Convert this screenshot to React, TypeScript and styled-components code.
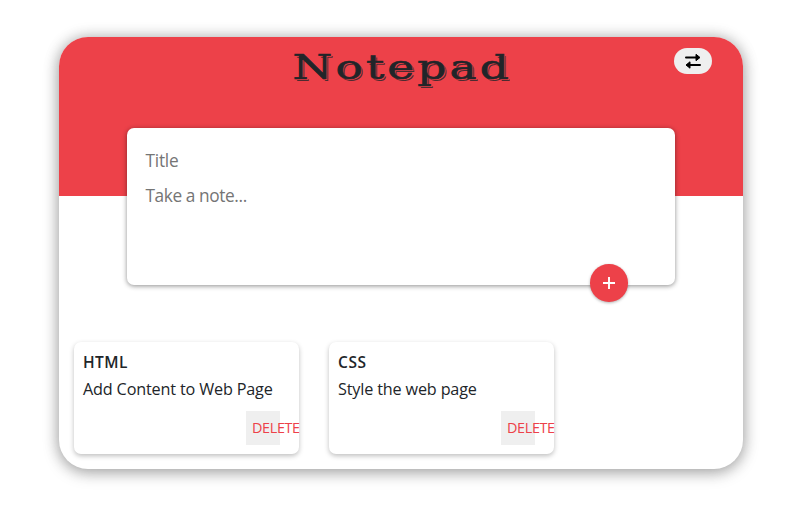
import React from 'react';
import styled, { createGlobalStyle } from 'styled-components';

const RED = '#ed4149';

const GlobalStyle = createGlobalStyle`
  * { box-sizing: border-box; }
  body {
    margin: 0;
    background: #fff;
    color: #212529;
    font-family: 'Open Sans', 'Noto Sans', sans-serif;
  }
  button, input, textarea { font-family: inherit; }
`;

const Page = styled.main`
  height: 507px;
  padding: 37px 59px 38px;
  overflow: hidden;
`;

const Panel = styled.section`
  height: 432px;
  width: 684px;
  border-radius: 29px;
  background: #fff;
  box-shadow: 0 4px 16px rgba(0, 0, 0, 0.25), 0 0 15px rgba(0, 0, 0, 0.22);
`;

const Header = styled.header`
  position: relative;
  height: 158.5px;
  display: flex;
  flex-direction: column;
  align-items: center;
  background: ${RED};
  border-radius: 29px 29px 0 0;
`;

const Title = styled.h1`
  margin: 9px 0 0;
  height: 44px;
  line-height: 44px;
  font-family: 'DejaVu Serif', serif;
  font-size: 32px;
  font-weight: 400;
  letter-spacing: 2.2px;
  white-space: nowrap;
  -webkit-text-stroke: 0.6px #212529;
  transform: translateX(1px) scale(1.42, 1.03);
  text-shadow: 0.8px 1px ${RED}, 1.5px 2px rgba(33, 37, 41, 0.8);
`;

const SwitchButton = styled.button`
  position: absolute;
  top: 11px;
  right: 31px;
  width: 38px;
  height: 26px;
  padding: 0;
  display: grid;
  place-items: center;
  border: 0;
  border-radius: 13px;
  background: #efefef;
`;

const Editor = styled.form`
  position: relative;
  width: 547.2px;
  height: 157px;
  margin: -67.5px auto 0;
  padding: 17px 18px;
  display: flex;
  flex-direction: column;
  border-radius: 7px;
  background: #fff;
  box-shadow: 0 1px 5px rgba(0, 0, 0, 0.45);
`;

const TitleInput = styled.input`
  height: 30px;
  padding: 0;
  border: 0;
  outline: 0;
  background: transparent;
  font-size: 17.3px;
  letter-spacing: -0.2px;
  &::placeholder { color: #757575; opacity: 1; }
`;

const NoteInput = styled.textarea`
  height: 70px;
  margin-top: 6px;
  padding: 2px 0;
  border: 0;
  outline: 0;
  resize: none;
  overflow: hidden;
  background: transparent;
  font-size: 17.3px;
  line-height: 26px;
  letter-spacing: -0.4px;
  &::placeholder { color: #757575; opacity: 1; }
`;

const AddButton = styled.button`
  position: absolute;
  right: 47px;
  bottom: -16.5px;
  width: 37.5px;
  height: 37.5px;
  padding: 0;
  display: grid;
  place-items: center;
  border: 0;
  border-radius: 50%;
  background: ${RED};
  box-shadow: 0 1px 3px rgba(0, 0, 0, 0.3);
`;

const Notes = styled.div`
  display: flex;
  gap: 30px;
  padding: 57px 15px 0;
`;

const NoteCard = styled.article`
  width: 225px;
  height: 112px;
  padding: 9px;
  display: flex;
  flex-direction: column;
  border-radius: 7px;
  background: #fff;
  box-shadow: 0 2px 5px rgba(0, 0, 0, 0.25);
`;

const NoteTitle = styled.h2<{ $spacing: number }>`
  margin: 0;
  height: 24px;
  font-size: 15.5px;
  line-height: 23px;
  font-weight: 600;
  letter-spacing: ${({ $spacing }) => $spacing}px;
`;

const NoteText = styled.p`
  margin: 3px 0 0;
  height: 24px;
  font-size: 16.2px;
  line-height: 23px;
  letter-spacing: -0.16px;
  white-space: nowrap;
`;

const DeleteButton = styled.button`
  align-self: flex-end;
  width: 34px;
  height: 34px;
  margin: 9px 10px 0 0;
  padding: 0 0 0 6px;
  border: 0;
  background: #efefef;
  color: ${RED};
  font-size: 14.4px;
  line-height: 34px;
  letter-spacing: -0.35px;
  text-align: left;
  white-space: nowrap;
`;

const notes = [
  { title: 'HTML', text: 'Add Content to Web Page', spacing: 0.4 },
  { title: 'CSS', text: 'Style the web page', spacing: 0.6 },
];

const SwapIcon = () => (
  <svg width="18" height="18" viewBox="0 0 18 18" fill="none" aria-hidden="true">
    <path d="M2 5.5H13M5 13H16" stroke="#000" strokeWidth="2" strokeLinecap="round" />
    <path d="M12 2.3L16 5.5L12 8.7ZM6 9.8L2 13L6 16.2Z" fill="#000" stroke="#000" strokeWidth="1" strokeLinejoin="round" />
  </svg>
);

const PlusIcon = () => (
  <svg width="14" height="14" viewBox="0 0 14 14" aria-hidden="true">
    <path d="M7 1V13M1 7H13" stroke="#fff" strokeWidth="1.9" />
  </svg>
);

export default function App() {
  return (
    <>
      <GlobalStyle />
      <Page>
        <Panel>
          <Header>
            <Title>Notepad</Title>
            <SwitchButton type="button" aria-label="Switch"><SwapIcon /></SwitchButton>
          </Header>
          <Editor>
            <TitleInput placeholder="Title" />
            <NoteInput placeholder="Take a note..." />
            <AddButton type="button" aria-label="Add note"><PlusIcon /></AddButton>
          </Editor>
          <Notes>
            {notes.map((note) => (
              <NoteCard key={note.title}>
                <NoteTitle $spacing={note.spacing}>{note.title}</NoteTitle>
                <NoteText>{note.text}</NoteText>
                <DeleteButton type="button">DELETE</DeleteButton>
              </NoteCard>
            ))}
          </Notes>
        </Panel>
      </Page>
    </>
  );
}
